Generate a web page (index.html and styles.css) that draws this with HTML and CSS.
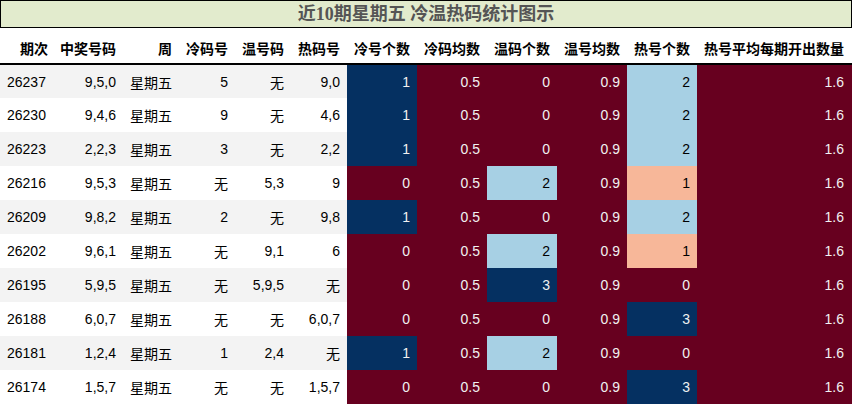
FILE: index.html
```html
<!DOCTYPE html>
<html lang="zh">
<head>
<meta charset="utf-8">
<link rel="stylesheet" href="styles.css">
</head>
<body>
<div class="title">近10期星期五 冷温热码统计图示</div>
<table class="stats">
<colgroup>
<col class="w55"><col class="w68"><col class="w56"><col class="w56"><col class="w56"><col class="w56">
<col class="w70"><col class="w70"><col class="w70"><col class="w70"><col class="w70"><col class="w155">
</colgroup>
<thead>
<tr><th>期次</th><th>中奖号码</th><th>周</th><th>冷码号</th><th>温号码</th><th>热码号</th><th>冷号个数</th><th>冷码均数</th><th>温码个数</th><th>温号均数</th><th>热号个数</th><th>热号平均每期开出数量</th></tr>
</thead>
<tbody>
<tr><td class="id">26237</td><td>9,5,0</td><td>星期五</td><td>5</td><td>无</td><td>9,0</td><td class="b">1</td><td class="r">0.5</td><td class="r">0</td><td class="r">0.9</td><td class="lb">2</td><td class="r">1.6</td></tr>
<tr><td class="id">26230</td><td>9,4,6</td><td>星期五</td><td>9</td><td>无</td><td>4,6</td><td class="b">1</td><td class="r">0.5</td><td class="r">0</td><td class="r">0.9</td><td class="lb">2</td><td class="r">1.6</td></tr>
<tr><td class="id">26223</td><td>2,2,3</td><td>星期五</td><td>3</td><td>无</td><td>2,2</td><td class="b">1</td><td class="r">0.5</td><td class="r">0</td><td class="r">0.9</td><td class="lb">2</td><td class="r">1.6</td></tr>
<tr><td class="id">26216</td><td>9,5,3</td><td>星期五</td><td>无</td><td>5,3</td><td>9</td><td class="r">0</td><td class="r">0.5</td><td class="lb">2</td><td class="r">0.9</td><td class="s">1</td><td class="r">1.6</td></tr>
<tr><td class="id">26209</td><td>9,8,2</td><td>星期五</td><td>2</td><td>无</td><td>9,8</td><td class="b">1</td><td class="r">0.5</td><td class="r">0</td><td class="r">0.9</td><td class="lb">2</td><td class="r">1.6</td></tr>
<tr><td class="id">26202</td><td>9,6,1</td><td>星期五</td><td>无</td><td>9,1</td><td>6</td><td class="r">0</td><td class="r">0.5</td><td class="lb">2</td><td class="r">0.9</td><td class="s">1</td><td class="r">1.6</td></tr>
<tr><td class="id">26195</td><td>5,9,5</td><td>星期五</td><td>无</td><td>5,9,5</td><td>无</td><td class="r">0</td><td class="r">0.5</td><td class="b">3</td><td class="r">0.9</td><td class="r">0</td><td class="r">1.6</td></tr>
<tr><td class="id">26188</td><td>6,0,7</td><td>星期五</td><td>无</td><td>无</td><td>6,0,7</td><td class="r">0</td><td class="r">0.5</td><td class="r">0</td><td class="r">0.9</td><td class="b">3</td><td class="r">1.6</td></tr>
<tr><td class="id">26181</td><td>1,2,4</td><td>星期五</td><td>1</td><td>2,4</td><td>无</td><td class="b">1</td><td class="r">0.5</td><td class="lb">2</td><td class="r">0.9</td><td class="r">0</td><td class="r">1.6</td></tr>
<tr><td class="id">26174</td><td>1,5,7</td><td>星期五</td><td>无</td><td>无</td><td>1,5,7</td><td class="r">0</td><td class="r">0.5</td><td class="r">0</td><td class="r">0.9</td><td class="b">3</td><td class="r">1.6</td></tr>
</tbody>
</table>
</body>
</html>
```
FILE: styles.css
```css
html, body {
  margin: 0;
  padding: 0;
  background: #ffffff;
}
body {
  width: 852px;
  font-family: "Liberation Sans", Arial, "Noto Sans CJK SC", sans-serif;
  color: #000;
}
.title {
  box-sizing: border-box;
  height: 28px;
  border: 1px solid #000;
  background: #e2ebcd;
  color: #555555;
  font-family: "Liberation Serif", "Noto Sans CJK SC", serif;
  font-weight: bold;
  font-size: 18px;
  line-height: 26px;
  text-align: center;
}
.stats {
  width: 852px;
  border-collapse: collapse;
  border-spacing: 0;
  table-layout: fixed;
  font-size: 14px;
}
.w55 { width: 55px; }
.w68 { width: 68px; }
.w56 { width: 56px; }
.w70 { width: 70px; }
.w155 { width: 155px; }
.stats th {
  height: 36px;
  padding: 4px 7px 0 0;
  box-sizing: border-box;
  text-align: right;
  font-weight: bold;
  font-family: "Liberation Sans", "Noto Sans CJK SC", sans-serif;
  border-bottom: 2px solid #000;
  white-space: nowrap;
}
.stats th:last-child { padding-right: 8px; }
.stats td {
  height: 34px;
  padding: 0 7px 0 0;
  box-sizing: border-box;
  text-align: right;
  white-space: nowrap;
}
.stats td:last-child { padding-right: 8px; }
.stats td.id {
  text-align: left;
  padding-left: 7px;
}
.stats tbody tr:nth-child(odd) { background: #f3f3f3; }
.stats td.b { background: #053061; color: #f1f1f1; }
.stats td.r { background: #67001f; color: #f1f1f1; }
.stats td.lb { background: #a7d0e4; color: #000; }
.stats td.s { background: #f7b799; color: #000; }
```
